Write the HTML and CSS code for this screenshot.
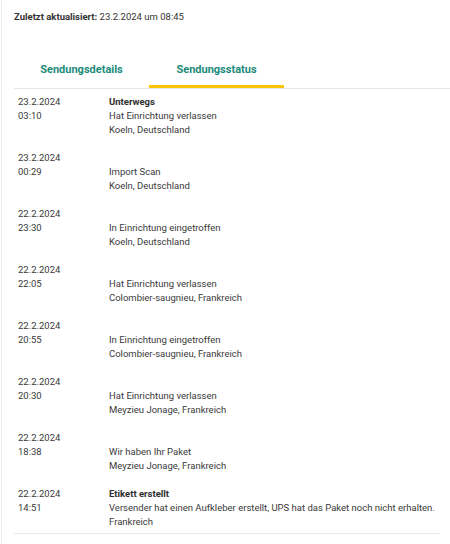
FILE: index.html
```html
<!DOCTYPE html>
<html lang="de">
<head>
<meta charset="utf-8">
<link rel="stylesheet" href="styles.css">
</head>
<body>
<div class="page">
  <p class="updated"><b>Zuletzt aktualisiert:</b> 23.2.2024 um 08:45</p>
  <div class="tabs">
    <div class="tab">Sendungsdetails</div>
    <div class="tab active">Sendungsstatus</div>
  </div>
  <div class="list">
    <div class="row">
      <div class="when">23.2.2024<br>03:10</div>
      <div class="what"><div class="title">Unterwegs</div><div>Hat Einrichtung verlassen</div><div>Koeln, Deutschland</div></div>
    </div>
    <div class="row">
      <div class="when">23.2.2024<br>00:29</div>
      <div class="what"><div class="title"></div><div>Import Scan</div><div>Koeln, Deutschland</div></div>
    </div>
    <div class="row">
      <div class="when">22.2.2024<br>23:30</div>
      <div class="what"><div class="title"></div><div>In Einrichtung eingetroffen</div><div>Koeln, Deutschland</div></div>
    </div>
    <div class="row">
      <div class="when">22.2.2024<br>22:05</div>
      <div class="what"><div class="title"></div><div>Hat Einrichtung verlassen</div><div>Colombier-saugnieu, Frankreich</div></div>
    </div>
    <div class="row">
      <div class="when">22.2.2024<br>20:55</div>
      <div class="what"><div class="title"></div><div>In Einrichtung eingetroffen</div><div>Colombier-saugnieu, Frankreich</div></div>
    </div>
    <div class="row">
      <div class="when">22.2.2024<br>20:30</div>
      <div class="what"><div class="title"></div><div>Hat Einrichtung verlassen</div><div>Meyzieu Jonage, Frankreich</div></div>
    </div>
    <div class="row">
      <div class="when">22.2.2024<br>18:38</div>
      <div class="what"><div class="title"></div><div>Wir haben Ihr Paket</div><div>Meyzieu Jonage, Frankreich</div></div>
    </div>
    <div class="row last">
      <div class="when">22.2.2024<br>14:51</div>
      <div class="what"><div class="title">Etikett erstellt</div><div>Versender hat einen Aufkleber erstellt, UPS hat das Paket noch nicht erhalten.</div><div>Frankreich</div></div>
    </div>
  </div>
</div>
</body>
</html>
```
FILE: styles.css
```css
html, body {
  margin: 0;
  padding: 0;
  background: #fff;
}
body {
  font-family: Roboto, "Liberation Sans", sans-serif;
  font-size: 9.5px;
  line-height: 14px;
  color: #3a3a3a;
}
.page {
  margin-left: 1px;
  border-left: 1px solid #ececec;
  padding-left: 12px;
  min-height: 544px;
  box-sizing: border-box;
}
.updated {
  margin: 0;
  padding-top: 10px;
  color: #333;
}
.updated b {
  font-weight: 700;
}
.tabs {
  display: flex;
  margin-top: 39px;
  border-bottom: 1px solid #e6e6e6;
}
.tab {
  width: 135px;
  text-align: center;
  font-size: 11px;
  font-weight: 700;
  color: #1b8a7a;
  line-height: 14px;
  padding: 0 0 8px;
  border-bottom: 3px solid transparent;
}
.tab.active {
  border-bottom-color: #ffc400;
}
.list {
  margin-right: 10px;
}
.row {
  display: flex;
  padding: 6px 0 8px;
}
.row.last {
  padding-bottom: 4px;
  border-bottom: 1px solid #e8e8e8;
}
.when {
  width: 95px;
  padding-left: 4px;
  box-sizing: border-box;
  flex: none;
}
.what {
  flex: 1;
}
.title {
  height: 14px;
  font-weight: 700;
  color: #2e2e2e;
}
```
